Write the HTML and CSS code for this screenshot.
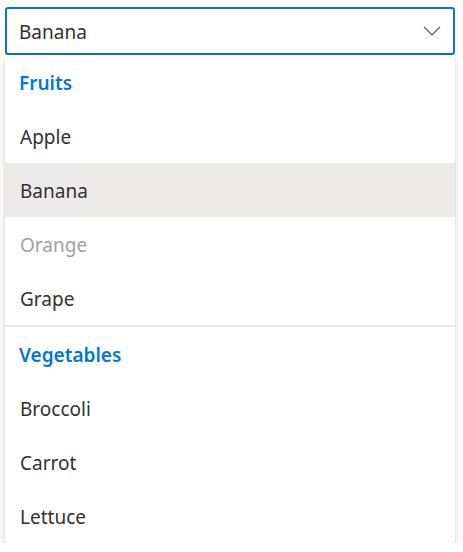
FILE: index.html
```html
<!DOCTYPE html>
<html lang="en">
<head>
    <meta charset="UTF-8">
    <meta name="viewport" content="width=device-width, initial-scale=1.0">
    <title>Dropdown</title>
    <link rel="stylesheet" href="styles.css">
</head>
<body>
    <div class="page">
        <!-- Closed field -->
        <div class="dropdown">
            <span class="dropdown-title">Banana</span>
            <svg class="chevron" width="18" height="10" viewBox="0 0 18 10">
                <path d="M1 1 L9 9 L17 1" fill="none" stroke="#605e5c" stroke-width="1.2"/>
            </svg>
        </div>

        <!-- Open list -->
        <div class="menu">
            <div class="menu-header">Fruits</div>
            <div class="menu-item">Apple</div>
            <div class="menu-item selected">Banana</div>
            <div class="menu-item disabled">Orange</div>
            <div class="menu-item">Grape</div>
            <div class="menu-divider"></div>
            <div class="menu-header">Vegetables</div>
            <div class="menu-item">Broccoli</div>
            <div class="menu-item">Carrot</div>
            <div class="menu-item">Lettuce</div>
        </div>
    </div>
</body>
</html>
```

FILE: styles.css
```css
/* Page */
body {
    margin: 0;
    background: #ffffff;
    font-family: "Noto Sans", "Open Sans", sans-serif;
    color: #323130;
}

.page {
    width: 450px;
    padding: 7px 0 0 5px;
}

/* Dropdown field */
.dropdown {
    box-sizing: border-box;
    height: 48px;
    border: 2px solid #0078d4;
    border-radius: 3px;
    padding: 1px 12px 0 12px;
    display: flex;
    align-items: center;
    justify-content: space-between;
}

.dropdown-title {
    font-size: 19px;
    color: #323130;
}

.chevron {
    margin-right: 0;
    margin-top: -2px;
}

/* Menu */
.menu {
    background: #ffffff;
    border-radius: 3px;
    box-shadow: 0 4.8px 10.8px rgba(0, 0, 0, 0.132), 0 0.9px 2.7px rgba(0, 0, 0, 0.108);
}

.menu-header,
.menu-item {
    box-sizing: border-box;
    height: 54px;
    padding-top: 2px;
    display: flex;
    align-items: center;
    font-size: 19px;
}

.menu-header {
    padding-left: 14px;
    font-weight: 600;
    color: #0078d4;
}

.menu-item {
    padding-left: 15px;
    color: #323130;
}

.menu-item.selected {
    background: #edebe9;
}

.menu-item.disabled {
    color: #a19f9d;
}

.menu-divider {
    height: 2px;
    background: #edebe9;
}
```
